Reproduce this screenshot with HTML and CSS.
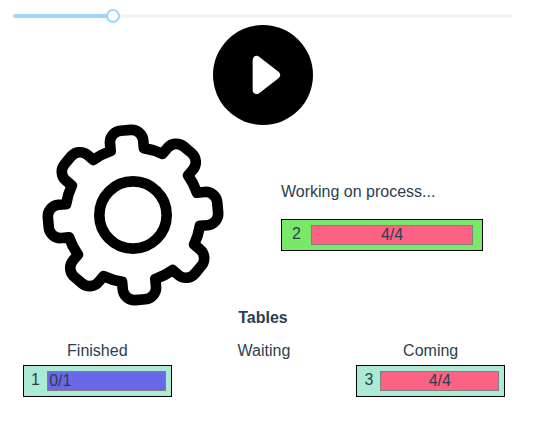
FILE: index.html
```html
<!DOCTYPE html>
<html lang="en">
<head>
<meta charset="utf-8">
<title>Process tables</title>
<link rel="stylesheet" href="styles.css">
</head>
<body>
<main class="app">
  <div class="slider">
    <input class="slider-input" type="range" min="0" max="100" value="20" aria-label="Speed">
  </div>
  <button class="play" type="button" aria-label="Play">
    <svg class="play-icon" viewBox="0 0 300 300" aria-hidden="true">
      <circle cx="150" cy="150" r="150"/>
      <path d="M131 105V195L189 150Z" fill="#fff" stroke="#fff" stroke-width="24" stroke-linejoin="round"/>
    </svg>
  </button>
  <section class="work">
    <div class="machine">
      <svg class="gear" viewBox="-270 -270 540 540" fill="none" stroke="#000" stroke-width="32" stroke-linejoin="round" aria-hidden="true">
        <circle r="101"/>
        <path transform="rotate(-5)" d="M-50-197V-220A35 35 0 0 1-15-255H15A35 35 0 0 1 50-220V-197
          A203 203 0 0 1 104-175L120-191A35 35 0 0 1 170-191L191-170A35 35 0 0 1 191-120L175-104
          A203 203 0 0 1 197-50H220A35 35 0 0 1 255-15V15A35 35 0 0 1 220 50H197
          A203 203 0 0 1 175 104L191 120A35 35 0 0 1 191 170L170 191A35 35 0 0 1 120 191L104 175
          A203 203 0 0 1 50 197V220A35 35 0 0 1 15 255H-15A35 35 0 0 1-50 220V197
          A203 203 0 0 1-104 175L-120 191A35 35 0 0 1-170 191L-191 170A35 35 0 0 1-191 120L-175 104
          A203 203 0 0 1-197 50H-220A35 35 0 0 1-255 15V-15A35 35 0 0 1-220-50H-197
          A203 203 0 0 1-175-104L-191-120A35 35 0 0 1-191-170L-170-191A35 35 0 0 1-120-191L-104-175
          A203 203 0 0 1-50-197Z"/>
      </svg>
    </div>
    <div class="current">
      <p class="status">Working on process...</p>
      <div class="process process-active">
        <span class="number">2</span>
        <span class="bar">4/4</span>
      </div>
    </div>
  </section>
  <h1 class="title">Tables</h1>
  <section class="columns">
    <div class="column">
      <h2 class="heading">Finished</h2>
      <div class="process">
        <span class="number">1</span>
        <span class="bar bar-done">0/1</span>
      </div>
    </div>
    <div class="column">
      <h2 class="heading">Waiting</h2>
    </div>
    <div class="column">
      <h2 class="heading">Coming</h2>
      <div class="process">
        <span class="number">3</span>
        <span class="bar">4/4</span>
      </div>
    </div>
  </section>
</main>
</body>
</html>
```
FILE: styles.css
```css
* {
  box-sizing: border-box;
}

body {
  margin: 0;
  background: #fff;
  color: #2c3e50;
  font: 16px/18px "Liberation Sans", Arial, sans-serif;
}

.app {
  padding: 14px 45px 24px 13px;
}

.slider {
  display: flex;
  align-items: center;
  height: 4px;
  border-radius: 2px;
  background: linear-gradient(to right, #9cd5ff 20%, #f5f5f5 20%);
}

.slider-input {
  flex: none;
  width: calc(100% + 14px);
  height: 14px;
  margin: 0 -7px;
  appearance: none;
  background: none;
}

.slider-input::-webkit-slider-thumb {
  appearance: none;
  width: 14px;
  height: 14px;
  border: 2px solid #9cd5ff;
  border-radius: 50%;
  background: #fff;
}

.play {
  display: block;
  width: 100px;
  margin: 7px auto 0;
  padding: 0;
  border: 0;
  border-radius: 50%;
  background: none;
}

.play-icon,
.gear {
  display: block;
  width: 100%;
  overflow: visible;
}

.work {
  display: grid;
  grid-template-columns: 1fr 1fr;
  align-items: center;
}

.machine {
  padding: 0 40px 0 30px;
}

.current {
  padding: 4px 30px 0 18px;
}

.status {
  margin: 0 0 18px;
}

.process {
  display: flex;
  padding: 5px 0;
  border: 1px solid #000;
  background: #abebd5;
  text-align: center;
}

.process-active {
  background: #78e868;
}

.number {
  width: calc(11% + 7px);
}

.bar {
  width: 81%;
  border: 1px solid #808080;
  background: #fc6283;
}

.bar-done {
  padding-left: 1px;
  background: #6969e8;
  text-align: left;
}

.title {
  margin: 4px 0 0;
  font-size: 16px;
  line-height: 18px;
  text-align: center;
}

.columns {
  display: grid;
  grid-template-columns: repeat(3, 1fr);
  margin-top: 15px;
}

.column {
  padding: 0 8px 0 10px;
}

.heading {
  margin: 0 0 5px;
  font-size: 16px;
  font-weight: 400;
  line-height: 18px;
  text-align: center;
}
```
